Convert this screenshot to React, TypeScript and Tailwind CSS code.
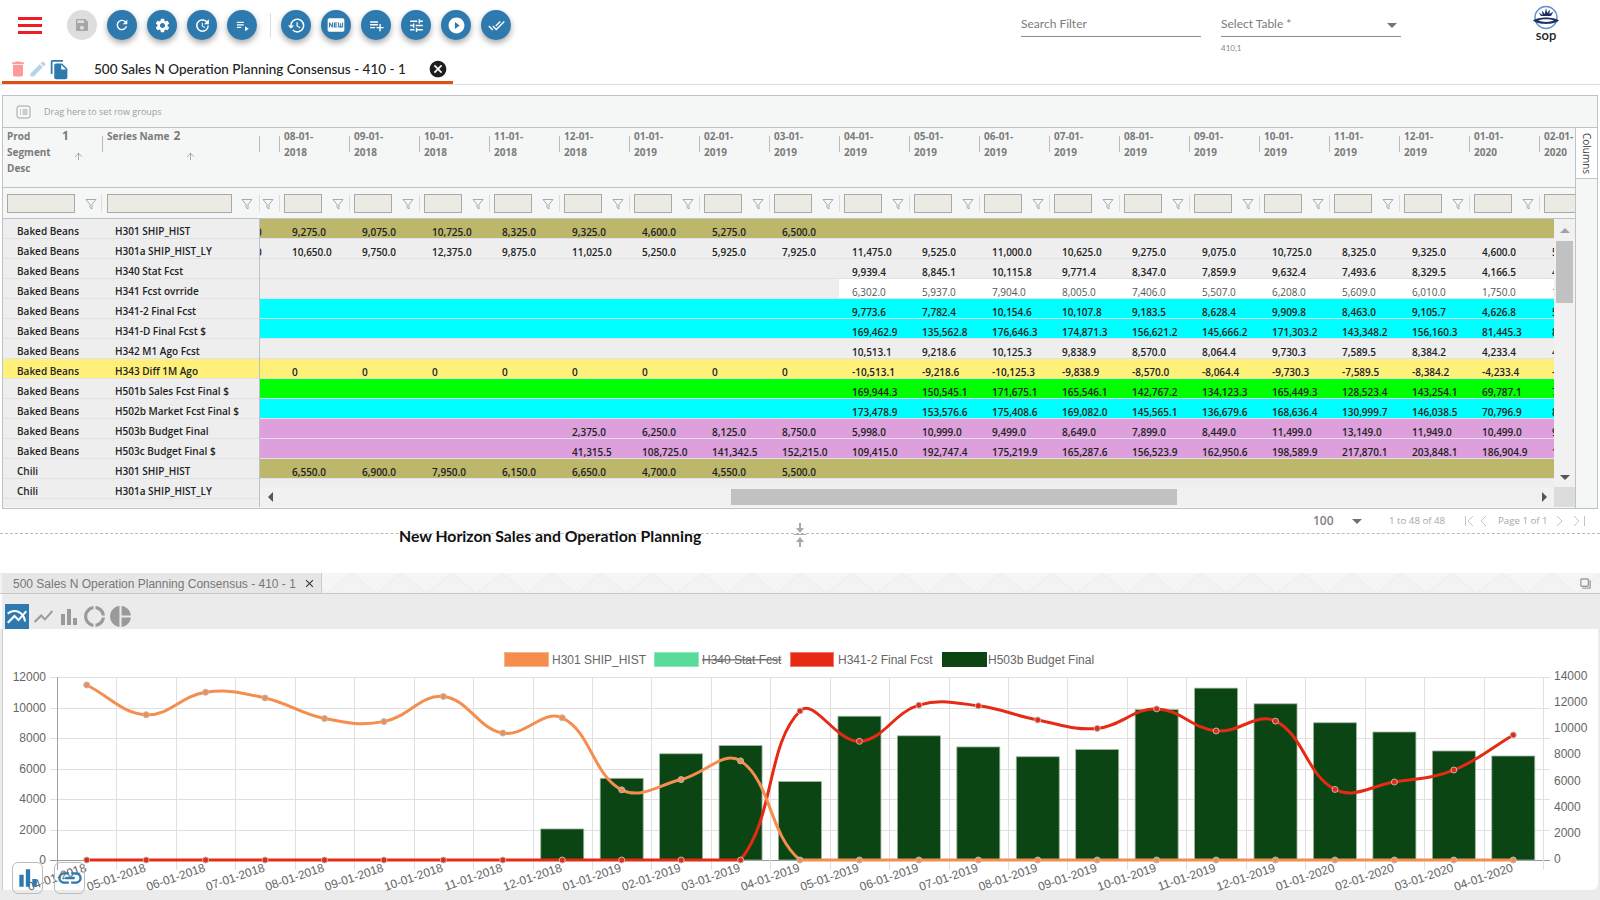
import { ReactNode } from "react";
import {
  MdBarChart,
  MdCancel,
  MdClose,
  MdDelete,
  MdDonutLarge,
  MdDoneAll,
  MdEdit,
  MdFiberNew,
  MdFileCopy,
  MdFilterNone,
  MdHistory,
  MdLink,
  MdMultilineChart,
  MdPieChart,
  MdPlayCircleFilled,
  MdPlaylistAdd,
  MdPlaylistPlay,
  MdRefresh,
  MdSave,
  MdSettings,
  MdShowChart,
  MdTune,
  MdUpdate,
} from "react-icons/md";
import { ArrowUp } from "lucide-react";

const GOLD = "bg-[#bdb76b]";
const CYAN = "bg-[#00ffff]";
const PLUM = "bg-[#dda0dd]";
const LIME = "bg-[#00ff00]";
const YELLOW = "bg-[#fff07a]";

const dates = [
  "08-01-2018", "09-01-2018", "10-01-2018", "11-01-2018", "12-01-2018", "01-01-2019", "02-01-2019",
  "03-01-2019", "04-01-2019", "05-01-2019", "06-01-2019", "07-01-2019", "08-01-2019", "09-01-2019",
  "10-01-2019", "11-01-2019", "12-01-2019", "01-01-2020", "02-01-2020",
];

type Row = {
  seg: string;
  name: string;
  bg: string;
  pinned?: string;
  lead?: string;
  start?: number;
  values: string[];
  plain?: boolean;
};

const rows: Row[] = [
  { seg: "Baked Beans", name: "H301 SHIP_HIST", bg: GOLD, lead: "10,275.0", values: ["9,275.0", "9,075.0", "10,725.0", "8,325.0", "9,325.0", "4,600.0", "5,275.0", "6,500.0"] },
  { seg: "Baked Beans", name: "H301a SHIP_HIST_LY", bg: "bg-[#eeeeee]", lead: "10,650.0", values: ["10,650.0", "9,750.0", "12,375.0", "9,875.0", "11,025.0", "5,250.0", "5,925.0", "7,925.0", "11,475.0", "9,525.0", "11,000.0", "10,625.0", "9,275.0", "9,075.0", "10,725.0", "8,325.0", "9,325.0", "4,600.0", "5,275.0"] },
  { seg: "Baked Beans", name: "H340 Stat Fcst", bg: "bg-[#eeeeee]", start: 8, values: ["9,939.4", "8,845.1", "10,115.8", "9,771.4", "8,347.0", "7,859.9", "9,632.4", "7,493.6", "8,329.5", "4,166.5", "4,756.2"] },
  { seg: "Baked Beans", name: "H341 Fcst ovrride", bg: "bg-[#eeeeee]", start: 8, plain: true, values: ["6,302.0", "5,937.0", "7,904.0", "8,005.0", "7,406.0", "5,507.0", "6,208.0", "5,609.0", "6,010.0", "1,750.0", "1,250.0"] },
  { seg: "Baked Beans", name: "H341-2 Final Fcst", bg: CYAN, start: 8, values: ["9,773.6", "7,782.4", "10,154.6", "10,107.8", "9,183.5", "8,628.4", "9,909.8", "8,463.0", "9,105.7", "4,626.8", "5,115.0"] },
  { seg: "Baked Beans", name: "H341-D Final Fcst $", bg: CYAN, start: 8, values: ["169,462.9", "135,562.8", "176,646.3", "174,871.3", "156,621.2", "145,666.2", "171,303.2", "143,348.2", "156,160.3", "81,445.3", "88,120.4"] },
  { seg: "Baked Beans", name: "H342 M1 Ago Fcst", bg: "bg-[#eeeeee]", start: 8, values: ["10,513.1", "9,218.6", "10,125.3", "9,838.9", "8,570.0", "8,064.4", "9,730.3", "7,589.5", "8,384.2", "4,233.4", "4,820.0"] },
  { seg: "Baked Beans", name: "H343 Diff 1M Ago", bg: YELLOW, pinned: YELLOW, values: ["0", "0", "0", "0", "0", "0", "0", "0", "-10,513.1", "-9,218.6", "-10,125.3", "-9,838.9", "-8,570.0", "-8,064.4", "-9,730.3", "-7,589.5", "-8,384.2", "-4,233.4", "-4,820.0"] },
  { seg: "Baked Beans", name: "H501b Sales Fcst Final $", bg: LIME, start: 8, values: ["169,944.3", "150,545.1", "171,675.1", "165,546.1", "142,767.2", "134,123.3", "165,449.3", "128,523.4", "143,254.1", "69,787.1", "77,210.5"] },
  { seg: "Baked Beans", name: "H502b Market Fcst Final $", bg: CYAN, start: 8, values: ["173,478.9", "153,576.6", "175,408.6", "169,082.0", "145,565.1", "136,679.6", "168,636.4", "130,999.7", "146,038.5", "70,796.9", "81,350.2"] },
  { seg: "Baked Beans", name: "H503b Budget Final", bg: PLUM, start: 4, values: ["2,375.0", "6,250.0", "8,125.0", "8,750.0", "5,998.0", "10,999.0", "9,499.0", "8,649.0", "7,899.0", "8,449.0", "11,499.0", "13,149.0", "11,949.0", "10,499.0", "9,792.0"] },
  { seg: "Baked Beans", name: "H503c Budget Final $", bg: PLUM, start: 4, values: ["41,315.5", "108,725.0", "141,342.5", "152,215.0", "109,415.0", "192,747.4", "175,219.9", "165,287.6", "156,523.9", "162,950.6", "198,589.9", "217,870.1", "203,848.1", "186,904.9", "171,340.0"] },
  { seg: "Chili", name: "H301 SHIP_HIST", bg: GOLD, lead: "7,250.0", values: ["6,550.0", "6,900.0", "7,950.0", "6,150.0", "6,650.0", "4,700.0", "4,550.0", "5,500.0"] },
  { seg: "Chili", name: "H301a SHIP_HIST_LY", bg: "bg-[#eeeeee]", values: [] },
];

function Fab({ children, off }: { children: ReactNode; off?: boolean }) {
  return (
    <div
      className={
        off
          ? "flex h-[30px] w-[30px] items-center justify-center rounded-full bg-[#dddddd] text-[#a6a6a6]"
          : "flex h-[30px] w-[30px] items-center justify-center rounded-full bg-[#2e79ae] text-white shadow-[0_3px_6px_rgba(0,0,0,0.35)]"
      }
    >
      {children}
    </div>
  );
}

function Funnel() {
  return (
    <svg width="12" height="12" viewBox="0 0 12 12" fill="none" stroke="#a3aaa8" strokeWidth="1">
      <path d="M1 1.5h10L7 6.5v4.5L5 9.5v-3z" />
    </svg>
  );
}

function Tri({ dir, color = "#555555" }: { dir: "up" | "down" | "left" | "right"; color?: string }) {
  const pts = {
    up: "0,8 5,3 10,8",
    down: "0,3 10,3 5,8",
    left: "7,0 7,10 2,5",
    right: "3,0 3,10 8,5",
  }[dir];
  return (
    <svg width="10" height="10" viewBox="0 0 10 10">
      <polygon points={pts} fill={color} />
    </svg>
  );
}

function Logo() {
  return (
    <svg width="30" height="26" viewBox="0 0 30 26">
      <circle cx="15" cy="12.5" r="11" fill="white" stroke="#5f93cc" strokeWidth="1.4" />
      <path
        d="M15 3l1.2 5 2.8-3.6-.6 4.6 4-2.4-2.4 4.4h-10L7.600 7.600l4 2.400-.6-4.600 2.800 3.600z"
        fill="#1c2f63"
      />
      <path d="M2 15.500C7 11.500 23 11.500 28 15.500 23 20 7 20 2 15.500z" fill="#1c2f63" />
      <path d="M7 15.500C11 13.700 19 13.700 23 15.500 19 17.400 11 17.400 7 15.500z" fill="white" />
    </svg>
  );
}

function GridHeader() {
  return (
    <div className="flex h-[60px] border-b border-[#bdc3c7] bg-[#f5f7f7] text-[10px] leading-[16px] font-bold text-[#7b7b7b]">
      <div className="flex w-[99px] pl-[4px]">
        <div className="w-[50px]">
          Prod
          <br />
          Segment
          <br />
          Desc
        </div>
        <div className="w-[40px]">
          <div className="pl-[5px] text-[12px]">1</div>
          <ArrowUp size={11} strokeWidth={1.2} className="ml-[16px] mt-[7px] text-[#666666]" />
        </div>
      </div>
      <div className="mt-[8px] h-[16px] w-px bg-[#bbbbbb]" />
      <div className="flex w-[156px] pl-[4px]">
        <div className="whitespace-nowrap">Series Name</div>
        <div className="w-[40px] pl-[4px]">
          <div className="text-[12px]">2</div>
          <ArrowUp size={11} strokeWidth={1.2} className="ml-[12px] mt-[7px] text-[#666666]" />
        </div>
      </div>
      <div className="mt-[8px] h-[16px] w-px bg-[#bbbbbb]" />
      <div className="flex min-w-0 flex-1 overflow-hidden pl-[19px]">
        {dates.map((d) => (
          <div key={d} className="flex w-[70px] shrink-0">
            <div className="mt-[8px] h-[16px] w-px bg-[#bbbbbb]" />
            <div className="w-[40px] pl-[4px]">
              {d.slice(0, 6)}
              <br />
              {d.slice(6)}
            </div>
          </div>
        ))}
      </div>
    </div>
  );
}

function GridFilters() {
  return (
    <div className="flex h-[31px] items-center border-b border-[#bdc3c7] bg-[#f5f7f7] pt-[1px]">
      <div className="ml-[4px] h-[19px] w-[68px] border border-[#a9a9a9] bg-[#ebeae3]" />
      <div className="ml-[10px] w-[12px]">
        <Funnel />
      </div>
      <div className="ml-[4px] h-[17px] w-px bg-[#dddddd]" />
      <div className="ml-[5px] h-[19px] w-[125px] border border-[#a9a9a9] bg-[#ebeae3]" />
      <div className="ml-[9px] w-[12px]">
        <Funnel />
      </div>
      <div className="ml-[6px] h-[17px] w-px bg-[#dddddd]" />
      <div className="ml-[2px] w-[12px]">
        <Funnel />
      </div>
      <div className="flex min-w-0 flex-1 overflow-hidden pl-[5px]">
        {dates.map((d) => (
          <div key={d} className="flex w-[70px] shrink-0 items-center">
            <div className="h-[17px] w-px bg-[#dddddd]" />
            <div className="ml-[4px] h-[19px] w-[38px] border border-[#a9a9a9] bg-[#ebeae3]" />
            <div className="ml-[10px] w-[12px]">
              <Funnel />
            </div>
          </div>
        ))}
      </div>
    </div>
  );
}

function GridBody() {
  return (
    <div className="flex h-[288px]">
      <div className="w-[257px] shrink-0 border-r border-[#bdc3c7] bg-[#eeeeee] text-[10px] font-semibold text-[#222222]">
        {rows.map((r, i) => (
          <div key={i} className={`flex h-[20px] items-center border-b border-[#dde2eb] pt-[6px] ${r.pinned ?? ""}`}>
            <div className="w-[98px] pl-[14px]">{r.seg}</div>
            <div className="pl-[14px] whitespace-nowrap">{r.name}</div>
          </div>
        ))}
      </div>
      <div className="flex min-w-0 flex-1 flex-col">
        <div className="h-[268px] overflow-hidden bg-[#eeeeee]">
          {rows.map((r, i) => {
            const start = r.start ?? 0;
            return (
              <div key={i} className={`flex h-[20px] border-b border-[#dde2eb] ${r.bg}`}>
                <div className="w-[19px] shrink-0 overflow-hidden">
                  {r.lead && (
                    <div className="ml-[-38px] w-[70px] text-[10px] leading-[26px] font-semibold whitespace-nowrap text-[#222222]">
                      {r.lead}
                    </div>
                  )}
                </div>
                {start > 0 && <div className="shrink-0" style={{ width: start * 70 }} />}
                {r.values.map((v, j) => (
                  <div
                    key={j}
                    className={
                      r.plain
                        ? "h-[19px] w-[70px] shrink-0 bg-white pl-[13px] text-[10px] leading-[26px] font-normal whitespace-nowrap text-[#555555]"
                        : "h-[19px] w-[70px] shrink-0 pl-[13px] text-[10px] leading-[26px] font-semibold whitespace-nowrap text-[#222222]"
                    }
                  >
                    {v}
                  </div>
                ))}
                {r.plain && <div className="w-[70px] shrink-0 bg-white" />}
              </div>
            );
          })}
        </div>
        <div className="relative flex h-[20px] items-center justify-between bg-[#f1f1f1] pl-[6px] pr-[5px]">
          <Tri dir="left" />
          <div className="absolute left-[471px] top-[2px] h-[16px] w-[446px] bg-[#c1c1c1]" />
          <Tri dir="right" />
        </div>
      </div>
      <div className="flex w-[21px] shrink-0 flex-col bg-[#f1f1f1]">
        <div className="flex h-[22px] items-center justify-center">
          <Tri dir="up" color="#a3a3a3" />
        </div>
        <div className="mx-[2px] h-[62px] bg-[#c1c1c1]" />
        <div className="flex-1" />
        <div className="flex h-[20px] items-center justify-center">
          <Tri dir="down" />
        </div>
        <div className="h-[20px] bg-[#dcdcdc]" />
      </div>
    </div>
  );
}

function Grid() {
  return (
    <div className="mx-[2px] mt-[10px] h-[414px] border border-[#bdc3c7] bg-[#f5f7f7] font-['Open_Sans',sans-serif]">
      <div className="flex h-[32px] items-center border-b border-[#bdc3c7] pl-[13px] text-[9px] text-[#9aa0a0]">
        <svg width="15" height="14" viewBox="0 0 15 14" fill="none" stroke="#8a8f8f" strokeWidth="0.8">
          <rect x="1" y="1" width="13" height="12" rx="2" />
          <path d="M4 5h1M6.500 5h5M4 7h1M6.500 7h5M4 9h1M6.500 9h5" />
        </svg>
        <span className="ml-[13px]">Drag here to set row groups</span>
      </div>
      <div className="flex h-[380px]">
        <div className="flex min-w-0 flex-1 flex-col">
          <GridHeader />
          <GridFilters />
          <GridBody />
        </div>
        <div className="w-[22px] shrink-0 border-l border-[#bdc3c7]">
          <div className="flex h-[51px] items-center justify-center border-b border-[#bdc3c7] bg-white">
            <span className="rotate-90 text-[10px] text-[#444444]">Columns</span>
          </div>
        </div>
      </div>
    </div>
  );
}

function Pager() {
  return (
    <div className="flex h-[25px] items-center border-b border-dashed border-[#bbbbbb] pl-[1313px] font-['Open_Sans',sans-serif] text-[9.7px] text-[#a8a8a8]">
      <span className="w-[39px] text-[12px] font-semibold text-[#808080]">100</span>
      <Tri dir="down" color="#707070" />
      <span className="ml-[27px] w-[76px] whitespace-nowrap">1 to 48 of 48</span>
      <svg width="22" height="12" viewBox="0 0 22 12" fill="none" stroke="#c4c4c4" strokeWidth="1">
        <path d="M0.500 1v10M8 1L3 6l5 5M21 1l-5 5 5 5" />
      </svg>
      <span className="ml-[11px] w-[58px] whitespace-nowrap">Page 1 of 1</span>
      <svg width="30" height="12" viewBox="0 0 30 12" fill="none" stroke="#c4c4c4" strokeWidth="1">
        <path d="M1 1l5 5-5 5M18 1l5 5-5 5M28.500 1v10" />
      </svg>
    </div>
  );
}

// chart.js style curve, tension 0.4, control points capped to the plot
const TOP = 677;
const ZERO = 860;
const LEFT = 57;
const RIGHT = 1543;
const STEP = (RIGHT - LEFT) / 25;
const px = (i: number) => LEFT + STEP * (i + 0.5);
const yL = (v: number) => ZERO - (v * (ZERO - TOP)) / 12000;
const yR = (v: number) => ZERO - (v * (ZERO - TOP)) / 14000;
const clamp = (v: number, a: number, b: number) => Math.max(a, Math.min(b, v));

function spline(pts: number[][]) {
  const cps = pts.map((p1, i) => {
    const p0 = pts[i - 1] ?? p1;
    const p2 = pts[i + 1] ?? p1;
    const d01 = Math.hypot(p1[0] - p0[0], p1[1] - p0[1]);
    const d12 = Math.hypot(p2[0] - p1[0], p2[1] - p1[1]);
    const total = d01 + d12 || 1;
    const fa = (0.4 * d01) / total;
    const fb = (0.4 * d12) / total;
    return {
      px: clamp(p1[0] - fa * (p2[0] - p0[0]), LEFT, RIGHT),
      py: clamp(p1[1] - fa * (p2[1] - p0[1]), TOP, ZERO),
      nx: clamp(p1[0] + fb * (p2[0] - p0[0]), LEFT, RIGHT),
      ny: clamp(p1[1] + fb * (p2[1] - p0[1]), TOP, ZERO),
    };
  });
  let d = `M${pts[0][0]} ${pts[0][1]}`;
  for (let i = 1; i < pts.length; i++) {
    d += `C${cps[i - 1].nx} ${cps[i - 1].ny} ${cps[i].px} ${cps[i].py} ${pts[i][0]} ${pts[i][1]}`;
  }
  return d;
}

const ship = [11475, 9525, 11000, 10625, 9275, 9075, 10725, 8325, 9325, 4600, 5275, 6500, 0, 0, 0, 0, 0, 0, 0, 0, 0, 0, 0, 0, 0];
const fcst = [0, 0, 0, 0, 0, 0, 0, 0, 0, 0, 0, 0, 9773.6, 7782.4, 10154.6, 10107.8, 9183.5, 8628.4, 9909.8, 8463, 9105.7, 4626.8, 5115, 5900, 8197];
const budget = [0, 0, 0, 0, 0, 0, 0, 0, 2375, 6250, 8125, 8750, 5998, 10999, 9499, 8649, 7899, 8449, 11499, 13149, 11949, 10499, 9792, 8339, 7956];
const months = ["04-01-2018", "05-01-2018", "06-01-2018", "07-01-2018", "08-01-2018", "09-01-2018", "10-01-2018", "11-01-2018", "12-01-2018", "01-01-2019", "02-01-2019", "03-01-2019", "04-01-2019", "05-01-2019", "06-01-2019", "07-01-2019", "08-01-2019", "09-01-2019", "10-01-2019", "11-01-2019", "12-01-2019", "01-01-2020", "02-01-2020", "03-01-2020", "04-01-2020"];

const legend = [
  { x: 504, w: 44, fill: "#f48d4e", line: "#f9b48b", tx: 552, label: "H301 SHIP_HIST" },
  { x: 654, w: 44, fill: "#5adb9b", line: "#8be8ba", tx: 702, label: "H340 Stat Fcst", off: true },
  { x: 790, w: 43, fill: "#e62a14", line: "#f0776a", tx: 838, label: "H341-2 Final Fcst" },
  { x: 942, w: 44, fill: "#0b4513", line: "#0b4513", tx: 988, label: "H503b Budget Final" },
];

function Chart() {
  const shipPts = ship.map((v, i) => [px(i), yL(v)]);
  const fcstPts = fcst.map((v, i) => [px(i), yL(v)]);
  return (
    <svg
      width="1595"
      height="261"
      viewBox="3 629 1595 261"
      className="block overflow-visible"
      fontFamily="Liberation Sans, Arial, sans-serif"
      fontSize="12"
      fill="#666666"
    >
      {legend.map((l) => (
        <g key={l.label}>
          <rect x={l.x + 0.5} y="652.500" width={l.w} height="14" fill={l.fill} stroke={l.line} />
          <text x={l.tx} y="663.500" textDecoration={l.off ? "line-through" : undefined}>
            {l.label}
          </text>
        </g>
      ))}
      {[0, 1, 2, 3, 4, 5, 6].map((i) => {
        const y = Math.round(ZERO - (i * (ZERO - TOP)) / 6) + 0.5;
        return (
          <g key={i}>
            <line x1={LEFT - 7} x2={RIGHT + 7} y1={y} y2={y} stroke={i === 0 ? "#9a9a9a" : "#e0e0e0"} />
            <text x="46" y={y + 3} textAnchor="end">
              {i * 2000}
            </text>
          </g>
        );
      })}
      {[0, 1, 2, 3, 4, 5, 6, 7].map((i) => (
        <text key={i} x="1554" y={Math.round(ZERO - (i * (ZERO - TOP)) / 7) + 3}>
          {i * 2000}
        </text>
      ))}
      {months.concat("").map((_, i) => {
        const x = Math.round(LEFT + STEP * i) + 0.5;
        return <line key={i} x1={x} x2={x} y1={TOP} y2={870} stroke={i === 0 ? "#a0a0a0" : "#e0e0e0"} />;
      })}
      {budget.map((v, i) =>
        v > 0 ? (
          <rect
            key={i}
            x={px(i) - 21.5}
            y={yR(v)}
            width="43"
            height={ZERO - yR(v)}
            fill="#0b4513"
            stroke="#9fb5a2"
            strokeWidth="0.8"
          />
        ) : null,
      )}
      <path d={spline(fcstPts)} fill="none" stroke="#e62a14" strokeWidth="3" />
      {fcstPts.map((p, i) => (
        <circle key={i} cx={p[0]} cy={p[1]} r="3" fill="#e62a14" stroke="#b9b9b9" strokeWidth="1" />
      ))}
      <path d={spline(shipPts)} fill="none" stroke="#f48d4e" strokeWidth="3" />
      {shipPts.map((p, i) => (
        <circle key={i} cx={p[0]} cy={p[1]} r="3" fill="#f48d4e" stroke="#b9b9b9" strokeWidth="1" />
      ))}
      {months.map((m, i) => (
        <text key={m} textAnchor="end" transform={`translate(${px(i) + 0.5} 871) rotate(-19)`}>
          {m}
        </text>
      ))}
    </svg>
  );
}

export default function App() {
  return (
    <div className="h-[900px] w-[1600px] overflow-hidden bg-white font-['Lato',sans-serif]">
      <div className="flex h-[50px] items-start">
        <div className="ml-[18px] mt-[17px] flex h-[17px] w-[24px] flex-col justify-between">
          <div className="h-[3px] bg-[#ee1c25]" />
          <div className="h-[3px] bg-[#ee1c25]" />
          <div className="h-[3px] bg-[#ee1c25]" />
        </div>
        <div className="ml-[25px] mt-[10px] flex items-center gap-[10px]">
          <Fab off><MdSave size={16} /></Fab>
          <Fab><MdRefresh size={16} /></Fab>
          <Fab><MdSettings size={17} /></Fab>
          <Fab><MdUpdate size={17} /></Fab>
          <Fab><MdPlaylistPlay size={15} /></Fab>
          <div className="ml-[3px] h-[25px] w-px bg-[#dddddd]" />
          <Fab><MdHistory size={19} /></Fab>
          <Fab><MdFiberNew size={20} /></Fab>
          <Fab><MdPlaylistAdd size={17} /></Fab>
          <Fab><MdTune size={17} /></Fab>
          <Fab><MdPlayCircleFilled size={19} /></Fab>
          <Fab><MdDoneAll size={17} /></Fab>
        </div>
        <div className="ml-[510px] mt-[14px] h-[23px] w-[180px] border-b border-[#8c8c8c] text-[12px] leading-[20px] text-[#7b7b7b]">
          Search Filter
        </div>
        <div className="ml-[20px] mt-[14px] w-[180px]">
          <div className="flex h-[23px] items-center justify-between border-b border-[#8c8c8c] pr-[4px] text-[12px] leading-[20px] text-[#7b7b7b]">
            <span className="-mt-[3px]">Select Table *</span>
            <Tri dir="down" color="#757575" />
          </div>
          <div className="mt-[6px] text-[8px] leading-[10px] text-[#888888]">410,1</div>
        </div>
        <div className="ml-[130px] mt-[5px] flex w-[30px] flex-col items-center">
          <Logo />
          <div className="-mt-[2px] text-[13px] leading-[12px] font-semibold text-[#222222]">sop</div>
        </div>
      </div>

      <div className="h-[35px] border-b border-[#e0e0e0]">
        <div className="ml-[2px] flex h-[34px] w-[451px] items-center border-b-[3px] border-[#dd4f12] pt-[7px]">
          <MdDelete size={20} className="ml-[6px] text-[#ff9a9a]" />
          <MdEdit size={20} className="text-[#b4d4ea]" />
          <MdFileCopy size={21} className="ml-[1px] text-[#2e79ae]" />
          <span className="ml-[24px] w-[335px] text-[13.5px] font-medium whitespace-nowrap text-[#222222]">
            500 Sales N Operation Planning Consensus - 410 - 1
          </span>
          <MdCancel size={20} className="-ml-[1px] text-[#1d1d1d]" />
        </div>
      </div>

      <Grid />
      <Pager />

      <div className="relative h-[39px]">
        <div className="relative -top-[8px] pl-[399px] text-[15.8px] leading-[20px] font-bold text-[#111111]">
          New Horizon Sales and Operation Planning
        </div>
        <svg width="14" height="24" viewBox="0 0 14 24" fill="#a8a8a8" className="absolute left-[793px] top-[-11px]">
          <path d="M6 0h2v5h3L7 10 3 5h3zM1 11h12v1H1zM7 14l4 5H8v5H6v-5H3z" />
        </svg>
      </div>

      <div className="relative flex h-[21px] border-b border-[#c8c8c8] bg-[#f5f5f5]">
        <svg width="1600" height="20" className="absolute left-0 top-0">
          <defs>
            <pattern id="zig" width="50" height="20" patternUnits="userSpaceOnUse" patternTransform="translate(26.700 0)">
              <path d="M0.500 20L25 0l24.500 20" fill="#f3f3f3" stroke="#ebebeb" />
            </pattern>
          </defs>
          <rect width="1600" height="20" fill="url(#zig)" />
        </svg>
        <div className="relative ml-[2px] flex h-[20px] w-[320px] items-center border-r border-[#cccccc] bg-[#e6e6e6] pl-[11px] pt-[1px] font-['Liberation_Sans',sans-serif] text-[12px] whitespace-nowrap text-[#777777]">
          500 Sales N Operation Planning Consensus - 410 - 1
          <MdClose size={13} className="ml-[7px] text-[#333333]" />
        </div>
        <div className="relative ml-auto mr-[9px] mt-[5px]">
          <MdFilterNone size={11} className="-scale-x-100 text-[#777777]" />
        </div>
      </div>

      <div className="ml-[2px] flex h-[35px] items-end bg-[#ebebeb] text-[#9a9a9a]">
        <div className="ml-[3px] flex h-[25px] w-[24px] items-center justify-center bg-[#2e79ae] text-white">
          <MdMultilineChart size={24} />
        </div>
        <div className="flex h-[25px] items-center">
          <MdShowChart size={23} className="ml-[3px]" />
          <MdBarChart size={24} className="ml-[2px]" />
          <MdDonutLarge size={25} className="ml-[1px]" />
          <MdPieChart size={25} className="ml-[1px]" />
        </div>
      </div>

      <div className="h-[271px] bg-[#ebebeb]">
        <div className="relative mx-[2px] h-[261px] rounded-br-[6px] border-l border-[#cccccc] bg-white">
          <Chart />
          <div className="absolute left-[9px] top-[233px] flex h-[32px] w-[31px] items-center justify-center rounded-[6px] border border-[#bbbbbb]">
            <MdBarChart size={26} className="text-[#2e79ae]" />
          </div>
          <div className="absolute left-[51px] top-[233px] flex h-[32px] w-[31px] items-center justify-center rounded-[6px] border border-[#bbbbbb]">
            <MdLink size={28} className="text-[#2e79ae]" />
          </div>
        </div>
      </div>
    </div>
  );
}
